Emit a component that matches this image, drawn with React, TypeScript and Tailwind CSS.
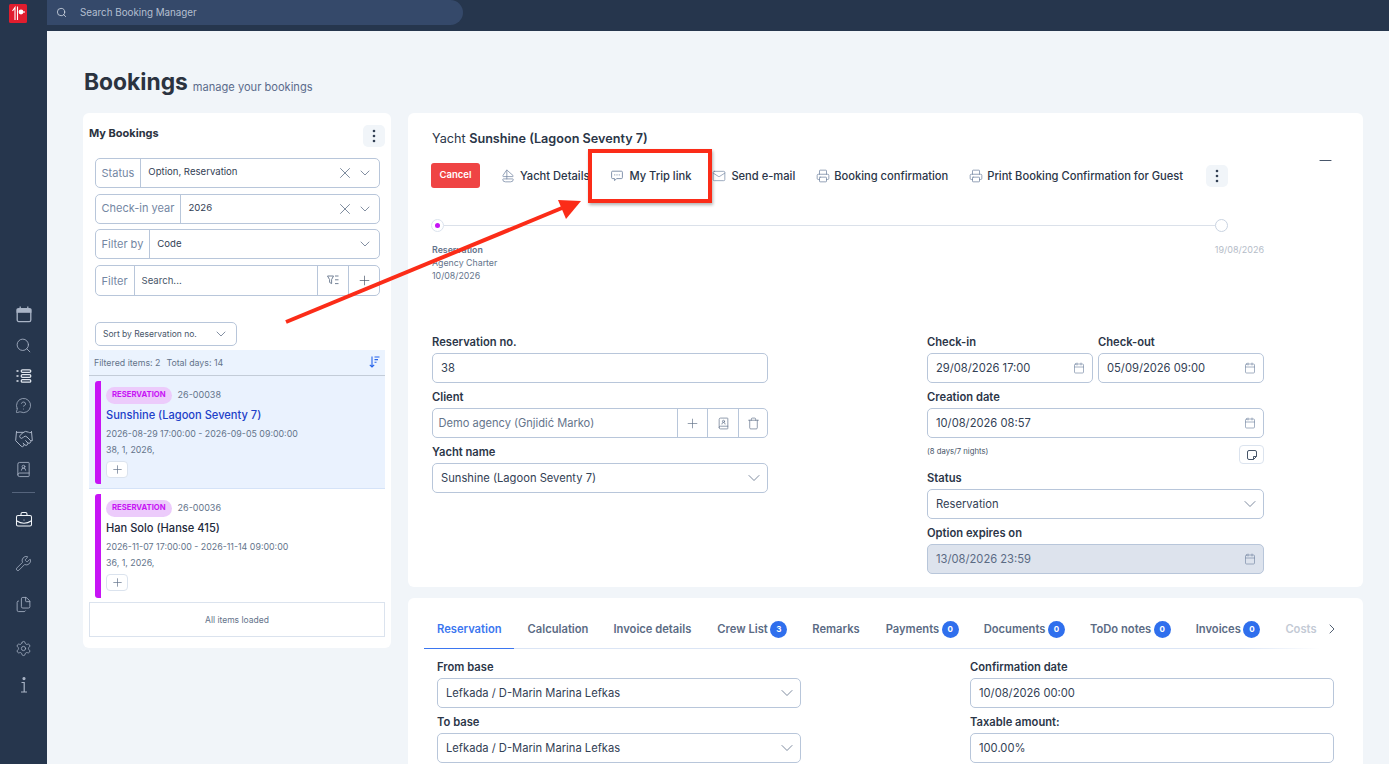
import {
  Search,
  MessageCircleQuestion,
  Handshake,
  BookUser,
  BriefcaseBusiness,
  Wrench,
  Files,
  Settings,
  Calendar,
  X,
  ChevronDown,
  ChevronRight,
  Plus,
  Sailboat,
  Mail,
  Printer,
  Trash,
  Minus,
} from "lucide-react";
import type { ReactNode } from "react";

const Kebab = () => (
  <button className="flex h-[22px] w-[22px] items-center justify-center rounded-[5px] bg-[#f1f5f9]">
    <svg width="4" height="14" viewBox="0 0 4 14" fill="#334155">
      <circle cx="2" cy="2" r="1.3" />
      <circle cx="2" cy="7" r="1.3" />
      <circle cx="2" cy="12" r="1.3" />
    </svg>
  </button>
);

const Logo = () => (
  <svg width="18" height="19" viewBox="0 0 18 19">
    <rect width="18" height="19" rx="1.5" fill="#e11d2e" />
    <path d="M3.5 7 L6 3.5 V16" stroke="#fff" strokeWidth="1.1" fill="none" />
    <path d="M8.5 2.5 V16" stroke="#fff" strokeWidth="1.1" fill="none" />
    <circle cx="12" cy="8" r="2.4" fill="#fff" />
    <path d="M12 8 H16" stroke="#fff" strokeWidth="1.1" />
  </svg>
);

const SideCalendar = () => (
  <svg width="16" height="17" viewBox="0 0 16 17" fill="none" stroke="#a9b4c6" strokeWidth="1.3">
    <rect x="1.2" y="2.6" width="13.6" height="13" rx="1.6" />
    <path d="M1.2 3.5 H14.8 V6.2 H1.2 Z" fill="#a9b4c6" />
    <path d="M4.2 0.5 V3 M11.8 0.5 V3" />
  </svg>
);

const SideList = () => (
  <svg width="16" height="14" viewBox="0 0 16 14" fill="none" stroke="#e2e8f0">
    <rect x="5.2" y="0.8" width="9.6" height="2.6" rx="1.3" strokeWidth="1.3" />
    <rect x="5.2" y="5.7" width="9.6" height="2.6" rx="1.3" strokeWidth="1.3" />
    <rect x="5.2" y="10.6" width="9.6" height="2.6" rx="1.3" strokeWidth="1.3" />
    <path d="M0.5 2 H2.5 M0.5 7 H2.5 M0.5 12 H2.5" strokeWidth="1.4" />
  </svg>
);

const SideInfo = () => (
  <svg width="8" height="16" viewBox="0 0 8 16" fill="none" stroke="#a9b4c6" strokeWidth="1.2">
    <circle cx="4" cy="1.6" r="1" fill="#a9b4c6" />
    <path d="M1.5 5.5 H4.2 V15 M1 15 H7" />
  </svg>
);

const FilterIcon = () => (
  <svg width="12" height="10" viewBox="0 0 12 10" fill="none" stroke="#64748b" strokeWidth="0.9">
    <path d="M0.5 1 H6.5 L4.6 4.6 V8.6 L2.6 7.4 V4.6 Z" />
    <path d="M8 1 H11.5 M8 4.8 H11.5 M8 8.6 H11.5" />
  </svg>
);

const SortIcon = () => (
  <svg width="11" height="12" viewBox="0 0 11 12" fill="none" stroke="#2563eb" strokeWidth="1.1">
    <path d="M3 0.5 V11 M0.8 8.8 L3 11 L5.2 8.8" />
    <path d="M5.5 1 H10.5 M5.5 3.6 H9 M5.5 6.2 H7.5" />
  </svg>
);

const NoteIcon = () => (
  <svg width="10" height="10" viewBox="0 0 10 10" fill="none" stroke="#475569" strokeWidth="1">
    <path d="M6.5 9.5 H2 A1.5 1.5 0 0 1 0.5 8 V2 A1.5 1.5 0 0 1 2 0.5 H8 A1.5 1.5 0 0 1 9.5 2 V6.5 Z" />
    <path d="M6.5 9.5 V6.5 H9.5" />
  </svg>
);

const TripIcon = () => (
  <svg width="12" height="12" viewBox="0 0 12 12" fill="none" stroke="currentColor" strokeWidth="0.9">
    <path d="M1.6 1.2 H10.4 A1 1 0 0 1 11.4 2.2 V7.6 A1 1 0 0 1 10.4 8.6 H5.6 L3.6 10.6 V8.6 H1.6 A1 1 0 0 1 0.6 7.6 V2.2 A1 1 0 0 1 1.6 1.2 Z" />
    <path d="M3.4 4.9 H4.2 M5.6 4.9 H6.4 M7.8 4.9 H8.6" strokeWidth="1.1" />
  </svg>
);

const Segment = ({ label, value, clear, pt }: { label: string; value: string; clear?: boolean; pt: string }) => (
  <div className="flex h-[30px] items-stretch rounded-[5px] border border-[#b8c6da] bg-white">
    <div className="flex items-center border-r border-[#b8c6da] pr-[6px] pl-[5.5px] text-[11px] text-[#7487a3]">{label}</div>
    <div className={`flex-1 pl-[7px] text-[9.6px] text-[#334155] ${pt}`}>{value}</div>
    <div className="flex items-center gap-[3.5px] pr-[6px] pl-[2px]">
      {clear && <X size={18} strokeWidth={1.1} className="text-[#64748b]" />}
      <ChevronDown size={16} strokeWidth={1.2} className="text-[#64748b]" />
    </div>
  </div>
);

const BookingCard = ({
  code,
  name,
  dates,
  meta,
  active,
}: {
  code: string;
  name: string;
  dates: string;
  meta: string;
  active?: boolean;
}) => (
  <div className={`flex h-[113px] pt-[5px] pb-[4px] pl-[6px] ${active ? "border-b border-[#d5e3f8] bg-[#eaf2fe]" : "bg-white"}`}>
    <div className="w-[6px] rounded-l-[3px] bg-[#c714f5]" />
    <div className="pl-[5px]">
      <div className="mt-[6px] flex items-center gap-[6px]">
        <span className="flex h-[17px] items-center rounded-full bg-[#eccbfb] px-[6px] text-[7.7px] font-bold text-[#c714f5]">
          RESERVATION
        </span>
        <span className="text-[9px] text-[#64748b]">{code}</span>
      </div>
      <div className={`mt-[3px] text-[11.1px] font-medium ${active ? "text-[#1d40c8]" : "text-[#1e293b]"}`}>{name}</div>
      <div className="mt-[4px] text-[8.85px] text-[#64748b]">{dates}</div>
      <div className="mt-[3px] text-[8.85px] text-[#64748b]">{meta}</div>
      <div className="mt-[4.5px] flex h-[17px] w-[22px] items-center justify-center rounded-[4px] border border-[#dbe3ee] bg-white">
        <Plus size={13} strokeWidth={1.3} className="text-[#64748b]" />
      </div>
    </div>
  </div>
);

const Label = ({ children }: { children: ReactNode }) => (
  <div className="mb-[5px] h-[11px] text-[11.2px] leading-[11px] font-semibold text-[#2b3648]">{children}</div>
);

const Box = ({ children, grey, className = "" }: { children: ReactNode; grey?: boolean; className?: string }) => (
  <div
    className={`flex h-[30px] items-center justify-between rounded-[5px] border border-[#b8c6da] pl-[8px] text-[11.2px] ${
      grey ? "bg-[#dde3ed] text-[#5b6b84]" : "bg-white text-[#334155]"
    } ${className}`}
  >
    {children}
  </div>
);

const DateBox = ({ value, grey }: { value: string; grey?: boolean }) => (
  <Box grey={grey} className="pr-[7px]">
    <span>{value}</span>
    <Calendar size={12} strokeWidth={1.3} className="text-[#7487a3]" />
  </Box>
);

const SelectBox = ({ value }: { value: string }) => (
  <Box className="pr-[3px]">
    <span>{value}</span>
    <ChevronDown size={20} strokeWidth={1} className="text-[#64748b]" />
  </Box>
);

const Action = ({ icon, label, className }: { icon: ReactNode; label: string; className: string }) => (
  <div className={`flex items-center pt-[1px] text-[11.15px] font-medium text-[#2b3648] ${className}`}>
    <span className="flex w-[18px] text-[#7487a3]">{icon}</span>
    {label}
  </div>
);

const tabs: { label: string; count?: number; cls: string }[] = [
  { label: "Calculation", cls: "ml-[26px]" },
  { label: "Invoice details", cls: "ml-[25px]" },
  { label: "Crew List", count: 3, cls: "ml-[26px]" },
  { label: "Remarks", cls: "ml-[25px]" },
  { label: "Payments", count: 0, cls: "ml-[26px]" },
  { label: "Documents", count: 0, cls: "ml-[25px]" },
  { label: "ToDo notes", count: 0, cls: "ml-[25px]" },
  { label: "Invoices", count: 0, cls: "ml-[25px]" },
];

export default function App() {
  return (
    <div className="relative flex h-[764px] w-full flex-col overflow-hidden bg-[#26364d] font-['Inter',sans-serif]">
      <header className="flex h-[31px] shrink-0">
        <div className="w-[47px] pt-[4px] pl-[9px]">
          <Logo />
        </div>
        <div className="flex h-[25px] w-[416px] items-center rounded-r-full rounded-l-[14px] bg-[#35496a] pl-[9px] text-[9.8px] text-[#b4bfd0]">
          <Search size={11} strokeWidth={1.6} className="mr-[13px] text-[#e2e8f0]" />
          <span className="pt-[1px]">Search Booking Manager</span>
        </div>
      </header>

      <div className="flex min-h-0 flex-1">
        <aside className="flex w-[47px] shrink-0 flex-col items-center pt-[275px] text-[#a9b4c6]">
          <div className="flex h-[17px] items-center"><SideCalendar /></div>
          <div className="mt-[14px] flex h-[17px] items-center"><Search size={17} strokeWidth={1.2} /></div>
          <div className="mt-[13px] flex h-[17px] items-center"><SideList /></div>
          <div className="mt-[13px] flex h-[17px] items-center"><MessageCircleQuestion size={17} strokeWidth={1.1} /></div>
          <div className="mt-[16px] flex h-[17px] items-center"><Handshake size={20} strokeWidth={1.2} /></div>
          <div className="mt-[14px] flex h-[17px] items-center"><BookUser size={17} strokeWidth={1.2} /></div>
          <div className="mt-[14px] h-px w-[23px] bg-[#55647c]" />
          <div className="mt-[18px] flex h-[18px] items-center text-[#f1f5f9]"><BriefcaseBusiness size={18} strokeWidth={1.4} /></div>
          <div className="mt-[26px] flex h-[17px] items-center"><Wrench size={17} strokeWidth={1.1} /></div>
          <div className="mt-[24px] flex h-[17px] items-center"><Files size={17} strokeWidth={1.2} /></div>
          <div className="mt-[27px] flex h-[17px] items-center"><Settings size={17} strokeWidth={1.1} /></div>
          <div className="mt-[19px] flex h-[17px] items-center"><SideInfo /></div>
        </aside>

        <main className="min-w-0 flex-1 bg-[#f1f5f9] pr-[26px] pl-[36px]">
          <div className="flex h-[82px] items-start pt-[37px]">
            <h1 className="ml-px text-[22.8px] leading-[28px] font-bold text-[#2b3340]">Bookings</h1>
            <span className="mt-[11px] ml-[5px] text-[11.1px] text-[#5b6b8c]">manage your bookings</span>
          </div>

          <div className="flex items-start gap-[17px]">
            <section className="h-[535px] w-[308px] shrink-0 rounded-[6px] bg-white px-[6px]">
              <div className="flex items-center justify-between pt-[12px] pb-[11px]">
                <h2 className="-mt-[6px] text-[11px] font-bold text-[#2b3340]">My Bookings</h2>
                <Kebab />
              </div>
              <div className="flex flex-col gap-[5.5px] pr-[5px] pl-[6px]">
                <Segment label="Status" value="Option, Reservation" clear pt="pt-[6px]" />
                <Segment label="Check-in year" value="2026" clear pt="pt-[6px]" />
                <Segment label="Filter by" value="Code" pt="pt-[7px]" />
                <div className="flex h-[31px] items-stretch rounded-[5px] border border-[#b8c6da]">
                  <div className="flex items-center border-r border-[#b8c6da] pt-[2px] pr-[6px] pl-[5.5px] text-[11px] text-[#7487a3]">Filter</div>
                  <div className="flex flex-1 items-center pt-[2px] pl-[7px] text-[9.6px] text-[#475569]">Search...</div>
                  <div className="flex w-[32px] items-center justify-center border-r border-l border-[#b8c6da]"><FilterIcon /></div>
                  <div className="flex w-[30px] items-center justify-center"><Plus size={15} strokeWidth={1.1} className="text-[#475569]" /></div>
                </div>
              </div>
              <div className="mt-[26px] ml-[6px] flex h-[24px] w-[142px] items-center justify-between rounded-[5px] border border-[#b8c6da] pr-[7px] pl-[7px] text-[8.5px] text-[#475569]">
                <span className="pt-[1px]">Sort by Reservation no.</span>
                <ChevronDown size={16} strokeWidth={1.2} className="text-[#64748b]" />
              </div>
              <div className="mt-[4px] flex h-[26px] items-center justify-between border-b border-[#c3ccd8] bg-[#ebf3fe] pr-[5px] pl-[5px] text-[8.8px] text-[#64748b]">
                <span className="pt-[1px]">
                  Filtered items: 2<span className="ml-[6px]">Total days: 14</span>
                </span>
                <SortIcon />
              </div>
              <BookingCard
                active
                code="26-00038"
                name="Sunshine (Lagoon Seventy 7)"
                dates="2026-08-29 17:00:00 - 2026-09-05 09:00:00"
                meta="38, 1, 2026,"
              />
              <BookingCard
                code="26-00036"
                name="Han Solo (Hanse 415)"
                dates="2026-11-07 17:00:00 - 2026-11-14 09:00:00"
                meta="36, 1, 2026,"
              />
              <div className="flex h-[35px] items-center justify-center border border-[#dbe3ee] pt-[2px] text-[8.5px] text-[#64748b]">
                All items loaded
              </div>
            </section>

            <div className="flex min-w-0 flex-1 flex-col gap-[11px]">
              <section className="relative h-[474px] rounded-[6px] bg-white pt-[18px] pl-[24px]">
                <h2 className="text-[12.65px] leading-[16px] text-[#2b3648]">
                  Yacht <span className="font-semibold">Sunshine (Lagoon Seventy 7)</span>
                </h2>
                <Minus size={19} strokeWidth={1.26} className="absolute top-[38px] right-[28px] text-[#475569]" />
                <div className="mt-[16px] flex h-[25px] items-center">
                  <button className="-ml-px flex h-[25px] w-[49px] items-center justify-center rounded-[3px] bg-[#ef4444] text-[9.5px] font-semibold text-white">
                    Cancel
                  </button>
                  <Action className="ml-[22px]" icon={<Sailboat size={14} strokeWidth={1.3} className="-ml-px" />} label="Yacht Details" />
                  <Action className="ml-[22px]" icon={<TripIcon />} label="My Trip link" />
                  <Action className="ml-[22px]" icon={<Mail size={14} strokeWidth={1.2} className="-ml-px" />} label="Send e-mail" />
                  <Action className="ml-[21px]" icon={<Printer size={14} strokeWidth={1.3} />} label="Booking confirmation" />
                  <Action className="ml-[21px]" icon={<Printer size={14} strokeWidth={1.3} />} label="Print Booking Confirmation for Guest" />
                  <div className="ml-[23px]"><Kebab /></div>
                </div>

                <div className="mt-[31px] -ml-px flex w-[797px] items-center">
                  <div className="flex h-[13px] w-[13px] items-center justify-center rounded-full border border-[#dbe3ee] bg-white">
                    <div className="h-[4.5px] w-[4.5px] rounded-full bg-[#c714f5]" />
                  </div>
                  <div className="h-px flex-1 bg-[#dbe1ea]" />
                  <div className="h-[13px] w-[13px] rounded-full border border-[#c9d3e1] bg-white" />
                </div>
                <div className="mt-[11px] flex w-[832px] justify-between text-[8.8px] leading-[13px]">
                  <div className="text-[#64748b]">
                    <div className="font-semibold">Reservation</div>
                    <div>Agency Charter</div>
                    <div>10/08/2026</div>
                  </div>
                  <div className="text-[9px] text-[#b5bcc8]">19/08/2026</div>
                </div>

                <div className="mt-[55px] flex w-[832px] justify-between">
                  <div className="flex w-[336px] flex-col">
                    <Label>Reservation no.</Label>
                    <Box className="mb-[9px]">38</Box>
                    <Label>Client</Label>
                    <div className="mb-[9px] flex h-[30px] items-stretch rounded-[5px] border border-[#b8c6da] text-[#64748b]">
                      <div className="flex flex-1 items-center pl-[5.5px] text-[11.1px]">Demo agency (Gnjidić Marko)</div>
                      <div className="flex w-[30px] items-center justify-center border-l border-[#b8c6da]"><Plus size={15} strokeWidth={1.1} /></div>
                      <div className="flex w-[31px] items-center justify-center border-l border-[#b8c6da]"><BookUser size={13} strokeWidth={1.3} /></div>
                      <div className="flex w-[29px] items-center justify-center border-l border-[#b8c6da]"><Trash size={13} strokeWidth={1.3} /></div>
                    </div>
                    <Label>Yacht name</Label>
                    <SelectBox value="Sunshine (Lagoon Seventy 7)" />
                  </div>
                  <div className="flex w-[337px] flex-col">
                    <div className="mb-[9px] flex gap-[5px]">
                      <div className="flex-1">
                        <Label>Check-in</Label>
                        <DateBox value="29/08/2026 17:00" />
                      </div>
                      <div className="flex-1">
                        <Label>Check-out</Label>
                        <DateBox value="05/09/2026 09:00" />
                      </div>
                    </div>
                    <Label>Creation date</Label>
                    <DateBox value="10/08/2026 08:57" />
                    <div className="mt-[7px] mb-[9px] flex items-start justify-between">
                      <span className="mt-[1px] text-[7.7px] text-[#475569]">(8 days/7 nights)</span>
                      <div className="flex h-[19px] w-[25px] items-center justify-center rounded-[4px] border border-[#dbe3ee]">
                        <NoteIcon />
                      </div>
                    </div>
                    <Label>Status</Label>
                    <SelectBox value="Reservation" />
                    <div className="mt-[9px]" />
                    <Label>Option expires on</Label>
                    <DateBox grey value="13/08/2026 23:59" />
                  </div>
                </div>
              </section>

              <section className="h-[200px] rounded-t-[6px] bg-white">
                <div className="relative ml-[16px] flex h-[51px] w-[896px] items-center border-b border-[#dbe5f5] pt-[12px] pl-[13px] text-[11.2px] font-semibold text-[#5b6b84]">
                  <span className="text-[#3b76f0]">Reservation</span>
                  <div className="absolute bottom-[-1px] left-0 h-px w-[90px] bg-[#3b76f0]" />
                  <div className="absolute right-0 bottom-[-1px] h-px w-[80px] bg-gradient-to-r from-transparent to-white" />
                  {tabs.map((t) => (
                    <span key={t.label} className={`flex items-center ${t.cls}`}>
                      {t.label}
                      {t.count !== undefined && (
                        <span className="ml-[2.5px] flex h-[17px] w-[17px] items-center justify-center rounded-full bg-[#2f6fed] text-[8px] font-bold text-white">
                          {t.count}
                        </span>
                      )}
                    </span>
                  ))}
                  <span className="ml-[25px] text-[#c3cad5]">Costs</span>
                  <ChevronRight size={16} strokeWidth={1.4} className="absolute top-[23px] right-[-20px] text-[#475569]" />
                </div>
                <div className="mt-[13px] flex justify-between pr-[29px] pl-[29px]">
                  <div className="flex w-[364px] flex-col">
                    <Label>From base</Label>
                    <SelectBox value="Lefkada / D-Marin Marina Lefkas" />
                    <div className="mt-[9px]" />
                    <Label>To base</Label>
                    <SelectBox value="Lefkada / D-Marin Marina Lefkas" />
                  </div>
                  <div className="flex w-[364px] flex-col">
                    <Label>Confirmation date</Label>
                    <Box>10/08/2026 00:00</Box>
                    <div className="mt-[9px]" />
                    <Label>Taxable amount:</Label>
                    <Box>100.00%</Box>
                  </div>
                </div>
              </section>
            </div>
          </div>
        </main>
      </div>

      <div className="pointer-events-none absolute top-[149px] left-[588px] h-[54px] w-[124px] border-[4px] border-[#fb2c18] shadow-[1px_2px_3px_rgba(0,0,0,0.3)]" />
      <svg className="pointer-events-none absolute top-0 left-0" width="1389" height="764">
        <path d="M286 322 L562 208" stroke="#fb2c18" strokeWidth="4" fill="none" />
        <path d="M581 201 L558 200 L566 219 Z" fill="#fb2c18" />
      </svg>
    </div>
  );
}
